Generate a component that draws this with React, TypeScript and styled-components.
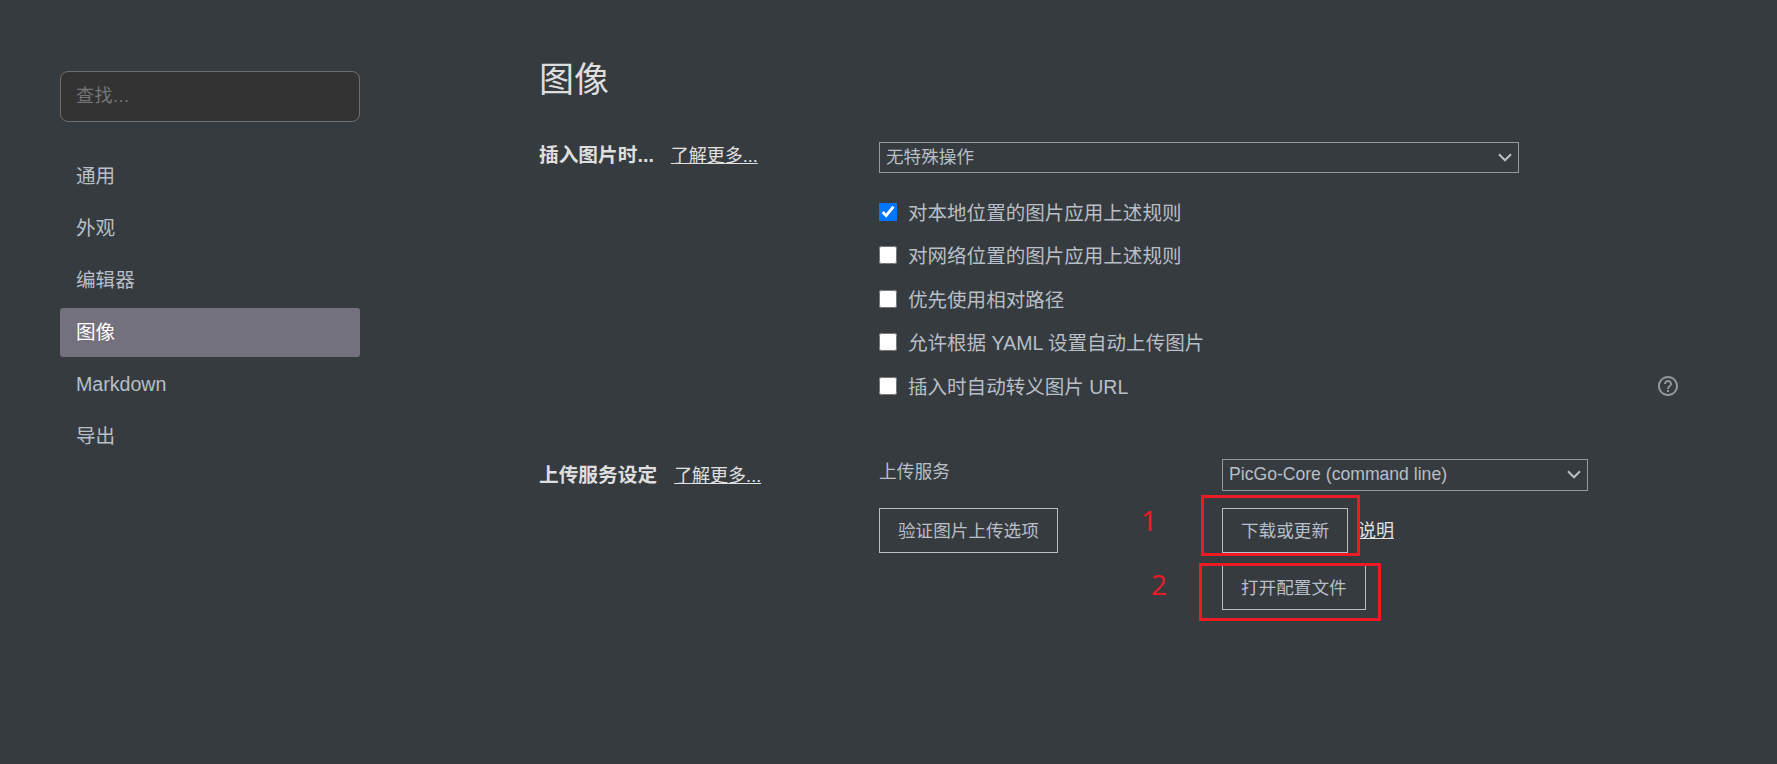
import React, { useState } from 'react';
import styled, { createGlobalStyle } from 'styled-components';


const GlobalStyle = createGlobalStyle`
    * {
        box-sizing: border-box;
    }

    body {
        margin: 0;
        background: #363b40;
        color: #b8bfc6;
        font-family: "Liberation Sans", "Noto Sans CJK SC", sans-serif;
    }
`

const Page = styled.div`
    display: flex;
    height: 764px;
    padding-left: 60px;
    overflow: hidden;
`

const Sidebar = styled.aside`
    width: 300px;
    padding-top: 71px;
    flex-shrink: 0;
`

const Search = styled.input`
    display: block;
    width: 100%;
    height: 51px;
    padding: 0 15px 1px;
    border: 1px solid #6f6f6f;
    border-radius: 8px;
    background: #333;
    color: #b8bfc6;
    font: 18px "Liberation Sans", "Noto Sans CJK SC", sans-serif;
    letter-spacing: 0.5px;
    outline: none;

    &::placeholder {
        color: #757575;
    }
`

const Nav = styled.nav`
    display: flex;
    flex-direction: column;
    gap: 3px;
    margin-top: 30px;
`

const NavItem = styled.a<{ $active: boolean }>`
    height: 49px;
    padding-left: 16px;
    border-radius: 3px;
    font-size: 19.6px;
    line-height: 49px;
    cursor: pointer;
    color: ${({ $active }) => ($active ? '#fff' : '#b8bfc6')};
    background: ${({ $active }) => ($active ? '#72717d' : 'transparent')};
`

const Content = styled.main`
    width: 1140px;
    margin-left: 180px;
    padding-top: 65px;
`

const Title = styled.h2`
    height: 29px;
    margin: 0 0 0 -1px;
    color: #dedede;
    font-size: 35px;
    font-weight: 400;
    line-height: 29px;
`

const Section = styled.section<{ $top: number }>`
    display: grid;
    grid-template-columns: 339px 1fr;
    margin-top: ${({ $top }) => $top}px;
`

const Label = styled.div<{ $top?: number }>`
    display: flex;
    align-items: baseline;
    gap: 17px;
    height: 28px;
    margin-top: ${({ $top = 0 }) => $top}px;
    margin-left: -1px;
    color: #dedede;
    font-size: 19.7px;
    font-weight: 700;
    line-height: 27px;
    white-space: nowrap;
`

const Link = styled.a`
    color: #e0e0e0;
    font-size: 18px;
    font-weight: 400;
    text-decoration: underline;
    cursor: pointer;
`

const SelectBox = styled.div<{ $width: number; $height: number }>`
    display: flex;
    align-items: center;
    width: ${({ $width }) => $width}px;
    height: ${({ $height }) => $height}px;
    padding: 0 6px;
    border: 1px solid #999;
    font-size: 17.6px;
    line-height: 28px;

    span {
        flex: 1;
        margin-top: -2px;
    }
`

const CheckList = styled.div`
    display: flex;
    flex-direction: column;
    margin-top: 17px;
`

const CheckRow = styled.label`
    display: flex;
    align-items: center;
    height: 43.5px;
    font-size: 19.55px;
    line-height: 28px;

    input {
        width: 18px;
        height: 18px;
        margin: 0 11px 0 0;
    }

    span {
        padding-top: 2px;
    }

    svg {
        margin-left: auto;
        margin-right: 2px;
    }
`

const UploadGrid = styled.div`
    display: grid;
    grid-template-columns: 343px 1fr;
    align-items: start;
`

const FieldName = styled.div`
    height: 49px;
    font-size: 17.8px;
    line-height: 26px;
`

const Actions = styled.div`
    display: flex;
    align-items: center;
    gap: 10px;

    ${Link} {
        margin-top: -2px;
    }
`

const Button = styled.button`
    height: 45px;
    padding: 2px 18px 0;
    border: 1px solid #b8bfc6;
    background: transparent;
    color: #b8bfc6;
    font: 17.6px "Liberation Sans", "Noto Sans CJK SC", sans-serif;
    line-height: 41px;
    white-space: nowrap;
`

const Stack = styled.div`
    position: relative;
    display: flex;
    flex-direction: column;
    align-items: flex-start;
    gap: 12px;
`

// Red frame drawn over the buttons
const Mark = styled.div<{ $x: number; $y: number; $w: number; $h: number }>`
    position: absolute;
    left: ${({ $x }) => $x}px;
    top: ${({ $y }) => $y}px;
    width: ${({ $w }) => $w}px;
    height: ${({ $h }) => $h}px;
    border: 3px solid #ed1c24;
    pointer-events: none;
`

const MarkNumber = styled.span<{ $x: number; $y: number }>`
    position: absolute;
    left: ${({ $x }) => $x}px;
    top: ${({ $y }) => $y}px;
    color: #ed1c24;
    font: 28px/28px "Open Sans", sans-serif;
`

const Chevron = () => (
    <svg width="14" height="9" viewBox="0 0 14 9" fill="none" stroke="#b8bfc6" strokeWidth="2">
        <path d="M1 1.3 7 7.3 13 1.3" />
    </svg>
)

const HelpIcon = () => (
    <svg width="20" height="20" viewBox="2 2 20 20" fill="#92979b">
        <path d="M11 18h2v-2h-2v2zm1-16C6.48 2 2 6.48 2 12s4.48 10 10 10 10-4.48 10-10S17.52 2 12 2zm0 18c-4.41 0-8-3.59-8-8s3.59-8 8-8 8 3.59 8 8-3.59 8-8 8zm0-14c-2.21 0-4 1.79-4 4h2c0-1.1.9-2 2-2s2 .9 2 2c0 2-3 1.75-3 5h2c0-2.25 3-2.5 3-5 0-2.21-1.79-4-4-4z" />
    </svg>
)

const menus = ['通用', '外观', '编辑器', '图像', 'Markdown', '导出'];

const options = [
    '对本地位置的图片应用上述规则',
    '对网络位置的图片应用上述规则',
    '优先使用相对路径',
    '允许根据 YAML 设置自动上传图片',
    '插入时自动转义图片 URL',
];

const App: React.FC = () => {
    const [active, setActive] = useState('图像');

    return (
        <Page>
            <GlobalStyle />
            <Sidebar>
                <Search placeholder="查找..." />
                <Nav>
                    {menus.map((name) => (
                        <NavItem key={name} $active={name === active} onClick={() => setActive(name)}>
                            {name}
                        </NavItem>
                    ))}
                </Nav>
            </Sidebar>
            <Content>
                <Title>图像</Title>
                <Section $top={48}>
                    <Label>插入图片时... <Link>了解更多...</Link></Label>
                    <div>
                        <SelectBox $width={640} $height={31}>
                            <span>无特殊操作</span>
                            <Chevron />
                        </SelectBox>
                        <CheckList>
                            {options.map((text, i) => (
                                <CheckRow key={text}>
                                    <input type="checkbox" defaultChecked={i === 0} />
                                    <span>{text}</span>
                                    {i === options.length - 1 && <HelpIcon />}
                                </CheckRow>
                            ))}
                        </CheckList>
                    </div>
                </Section>
                <Section $top={51}>
                    <Label $top={3}>上传服务设定 <Link>了解更多...</Link></Label>
                    <UploadGrid>
                        <FieldName>上传服务</FieldName>
                        <SelectBox $width={366} $height={32}>
                            <span>PicGo-Core (command line)</span>
                            <Chevron />
                        </SelectBox>
                        <Actions>
                            <Button>验证图片上传选项</Button>
                        </Actions>
                        <Stack>
                            <Actions>
                                <Button>下载或更新</Button>
                                <Link>说明</Link>
                            </Actions>
                            <Button>打开配置文件</Button>
                            <Mark $x={-21} $y={-13} $w={159} $h={61} />
                            <Mark $x={-23} $y={55} $w={182} $h={58} />
                            <MarkNumber $x={-81} $y={-2}>1</MarkNumber>
                            <MarkNumber $x={-71} $y={62}>2</MarkNumber>
                        </Stack>
                    </UploadGrid>
                </Section>
            </Content>
        </Page>
    )
};

export default App;
